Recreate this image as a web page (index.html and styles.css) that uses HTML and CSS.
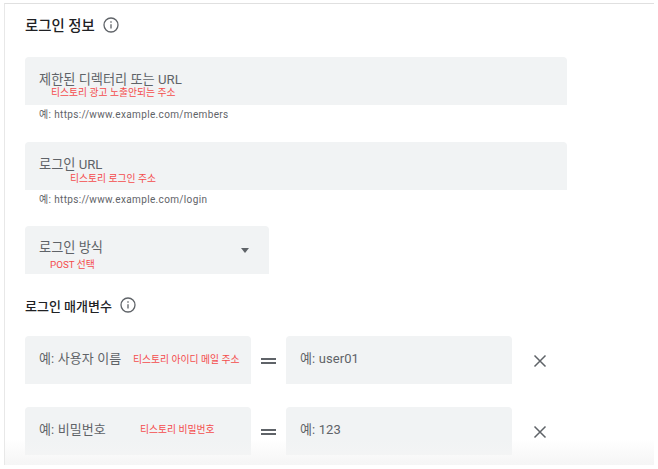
FILE: index.html
```html
<!DOCTYPE html>
<html lang="ko">
<head>
  <meta charset="UTF-8">
  <title>로그인 정보</title>
  <link rel="stylesheet" href="styles.css">
</head>
<body>
  <div class="panel">
    <div class="heading heading-main">
      <span class="heading-text">로그인 정보</span>
      <svg class="info" viewBox="0 0 16 16"><circle cx="8" cy="8" r="7"/><path d="M8 7.2v4.4M8 4.2v1.6"/></svg>
    </div>

    <div class="field wide">
      <span class="label">제한된 디렉터리 또는 URL</span>
      <span class="note note-1">티스토리 광고 노출안되는 주소</span>
    </div>
    <div class="hint">예: https://www.example.com/members</div>

    <div class="field wide second">
      <span class="label">로그인 URL</span>
      <span class="note note-2">티스토리 로그인 주소</span>
    </div>
    <div class="hint">예: https://www.example.com/login</div>

    <div class="field select">
      <span class="label">로그인 방식</span>
      <span class="note note-3">POST 선택</span>
      <span class="caret"></span>
    </div>

    <div class="heading heading-sub">
      <span class="heading-text">로그인 매개변수</span>
      <svg class="info" viewBox="0 0 16 16"><circle cx="8" cy="8" r="7"/><path d="M8 7.2v4.4M8 4.2v1.6"/></svg>
    </div>

    <div class="param-row">
      <div class="field param">
        <span class="value">예: 사용자 이름</span>
        <span class="note note-4">티스토리 아이디 메일 주소</span>
      </div>
      <div class="equals"></div>
      <div class="field param"><span class="value">예: user01</span></div>
      <svg class="remove" viewBox="0 0 14 14"><path d="M1.5 1.5l11 11M12.5 1.5l-11 11"/></svg>
    </div>

    <div class="param-row last">
      <div class="field param">
        <span class="value">예: 비밀번호</span>
        <span class="note note-5">티스토리 비밀번호</span>
      </div>
      <div class="equals"></div>
      <div class="field param"><span class="value">예: 123</span></div>
      <svg class="remove" viewBox="0 0 14 14"><path d="M1.5 1.5l11 11M12.5 1.5l-11 11"/></svg>
    </div>

    <div class="fade"></div>
  </div>
</body>
</html>
```

FILE: styles.css
```css
html, body {
  height: 100%;
}

body {
  margin: 0;
  background: #fff;
  font-family: Roboto, "Noto Sans CJK KR", sans-serif;
  overflow: hidden;
}

.panel {
  position: relative;
  box-sizing: border-box;
  width: 650px;
  height: 462px;
  margin: 3px 0 0 4px;
  padding: 0 0 0 20px;
  border-top: 1px solid #e0e0e0;
  border-left: 1px solid #e8e8e8;
  overflow: hidden;
}

.heading {
  display: flex;
  align-items: center;
  color: #202124;
  font-weight: 500;
  gap: 8px;
}

.heading-main {
  height: 20px;
  margin-top: 10px;
  font-size: 14.4px;
}

.heading-main .info {
  margin-top: 2px;
}

.heading-sub {
  height: 20px;
  margin-top: 21px;
  font-size: 13px;
}

.info {
  width: 16px;
  height: 16px;
  fill: none;
  stroke: #5f6368;
  stroke-width: 1.3;
}

.field {
  position: relative;
  box-sizing: border-box;
  height: 48px;
  background: #f1f3f4;
  border-radius: 4px 4px 0 0;
  color: #5f6368;
}

.wide {
  width: 542px;
  margin-top: 23px;
}

.wide.second {
  margin-top: 20px;
}

.label {
  position: absolute;
  left: 14px;
  top: 13px;
  font-size: 13.2px;
  line-height: 20px;
}

.note {
  position: absolute;
  color: #f44c4c;
  font-size: 9.8px;
  line-height: 14px;
  white-space: nowrap;
}

.note-1 { left: 26px; top: 29px; }
.note-2 { left: 45px; top: 30px; }
.note-3 { left: 25px; top: 32px; }
.note-4 { left: 108px; top: 17px; }
.note-5 { left: 115px; top: 16px; }

.hint {
  margin-top: 3px;
  color: #5f6368;
  font-size: 10px;
  line-height: 14px;
  letter-spacing: 0.35px;
  padding-left: 14px;
}

.select {
  width: 244px;
  margin-top: 19px;
}

.select .label {
  top: 12px;
}

.caret {
  position: absolute;
  right: 20px;
  top: 22px;
  border-left: 4.5px solid transparent;
  border-right: 4.5px solid transparent;
  border-top: 5px solid #5f6368;
}

.param-row {
  display: flex;
  align-items: center;
  margin-top: 21px;
}

.param-row.last {
  margin-top: 23px;
}

.param {
  width: 226px;
  flex: none;
}

.value {
  position: absolute;
  left: 14px;
  top: 13px;
  font-size: 13px;
  line-height: 20px;
  letter-spacing: 0.1px;
}

.equals {
  box-sizing: border-box;
  width: 15px;
  height: 6px;
  margin: 2px 10px 0;
  border-top: 2px solid #5f6368;
  border-bottom: 2px solid #5f6368;
}

.remove {
  width: 14px;
  height: 14px;
  margin: 2px 0 0 21px;
  fill: none;
  stroke: #5f6368;
  stroke-width: 1.5;
}

.fade {
  position: absolute;
  left: 0;
  right: 0;
  bottom: 0;
  height: 26px;
  background: linear-gradient(rgba(245, 245, 245, 0), #f5f5f5);
}
```
